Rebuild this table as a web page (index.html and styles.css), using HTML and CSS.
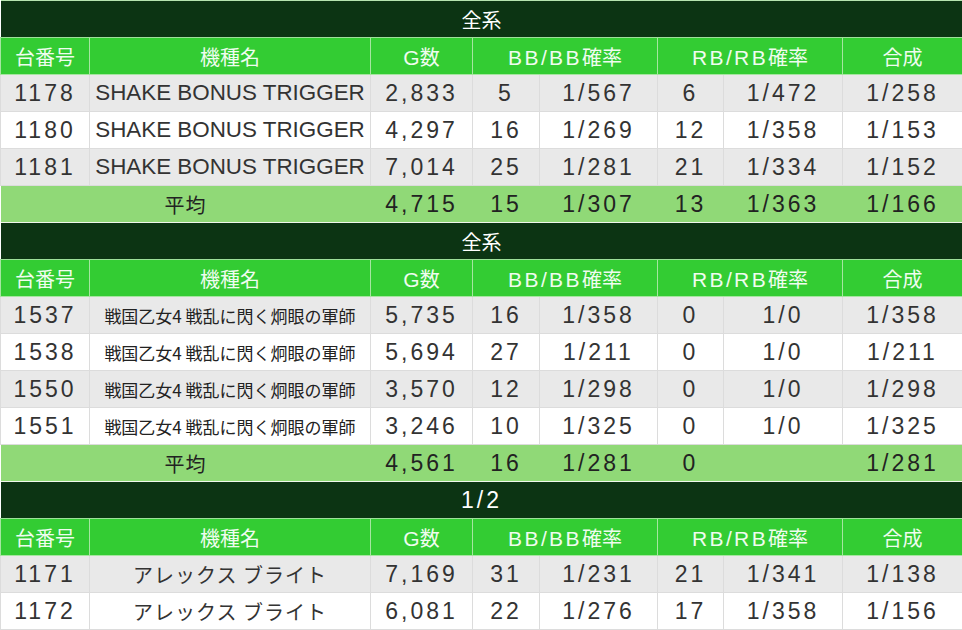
FILE: index.html
```html
<!DOCTYPE html>
<html lang="ja">
<head>
<meta charset="utf-8">
<title>データ</title>
<link rel="stylesheet" href="styles.css">
</head>
<body>
<table class="tbl">
  <colgroup>
    <col class="c1"><col class="c2"><col class="c3"><col class="c4"><col class="c5"><col class="c6"><col class="c7"><col class="c8">
  </colgroup>
  <tbody>
    <tr class="title"><td colspan="8">全系</td></tr>
    <tr class="head"><th>台番号</th><th>機種名</th><th><span class="lat">G</span>数</th><th colspan="2"><span class="lat2">BB/BB</span>確率</th><th colspan="2"><span class="lat2">RB/RB</span>確率</th><th>合成</th></tr>
    <tr class="row g"><td>1178</td><td class="nm en">SHAKE BONUS TRIGGER</td><td>2,833</td><td>5</td><td>1/567</td><td>6</td><td>1/472</td><td>1/258</td></tr>
    <tr class="row w"><td>1180</td><td class="nm en">SHAKE BONUS TRIGGER</td><td>4,297</td><td>16</td><td>1/269</td><td>12</td><td>1/358</td><td>1/153</td></tr>
    <tr class="row g"><td>1181</td><td class="nm en">SHAKE BONUS TRIGGER</td><td>7,014</td><td>25</td><td>1/281</td><td>21</td><td>1/334</td><td>1/152</td></tr>
    <tr class="avg"><td colspan="2" class="jp">平均</td><td>4,715</td><td>15</td><td>1/307</td><td>13</td><td>1/363</td><td>1/166</td></tr>

    <tr class="title"><td colspan="8">全系</td></tr>
    <tr class="head"><th>台番号</th><th>機種名</th><th><span class="lat">G</span>数</th><th colspan="2"><span class="lat2">BB/BB</span>確率</th><th colspan="2"><span class="lat2">RB/RB</span>確率</th><th>合成</th></tr>
    <tr class="row g"><td>1537</td><td class="nm sm">戦国乙女4 戦乱に閃く炯眼の軍師</td><td>5,735</td><td>16</td><td>1/358</td><td>0</td><td>1/0</td><td>1/358</td></tr>
    <tr class="row w"><td>1538</td><td class="nm sm">戦国乙女4 戦乱に閃く炯眼の軍師</td><td>5,694</td><td>27</td><td>1/211</td><td>0</td><td>1/0</td><td>1/211</td></tr>
    <tr class="row g"><td>1550</td><td class="nm sm">戦国乙女4 戦乱に閃く炯眼の軍師</td><td>3,570</td><td>12</td><td>1/298</td><td>0</td><td>1/0</td><td>1/298</td></tr>
    <tr class="row w"><td>1551</td><td class="nm sm">戦国乙女4 戦乱に閃く炯眼の軍師</td><td>3,246</td><td>10</td><td>1/325</td><td>0</td><td>1/0</td><td>1/325</td></tr>
    <tr class="avg"><td colspan="2" class="jp">平均</td><td>4,561</td><td>16</td><td>1/281</td><td>0</td><td></td><td>1/281</td></tr>

    <tr class="title"><td colspan="8" class="num">1/2</td></tr>
    <tr class="head"><th>台番号</th><th>機種名</th><th><span class="lat">G</span>数</th><th colspan="2"><span class="lat2">BB/BB</span>確率</th><th colspan="2"><span class="lat2">RB/RB</span>確率</th><th>合成</th></tr>
    <tr class="row g"><td>1171</td><td class="nm kana">アレックス ブライト</td><td>7,169</td><td>31</td><td>1/231</td><td>21</td><td>1/341</td><td>1/138</td></tr>
    <tr class="row w"><td>1172</td><td class="nm kana">アレックス ブライト</td><td>6,081</td><td>22</td><td>1/276</td><td>17</td><td>1/358</td><td>1/156</td></tr>
  </tbody>
</table>
</body>
</html>
```

FILE: styles.css
```css
html, body {
  margin: 0;
  padding: 0;
  background: #ffffff;
}

.tbl {
  width: 962px;
  border-collapse: collapse;
  table-layout: fixed;
  font-family: "Liberation Sans", "Noto Sans CJK JP", sans-serif;
}

.c1 { width: 89px; }
.c2 { width: 281px; }
.c3 { width: 102px; }
.c4 { width: 67px; }
.c5 { width: 118px; }
.c6 { width: 66px; }
.c7 { width: 119px; }
.c8 { width: 120px; }

.tbl td, .tbl th {
  height: 36px;
  padding: 0;
  text-align: center;
  vertical-align: middle;
  white-space: nowrap;
  overflow: hidden;
}

.title td {
  background: #0c3413;
  color: #ffffff;
  font-family: "Noto Sans CJK JP", sans-serif;
  font-size: 20px;
  border-top: 1px solid #b7e4b0;
  border-bottom: 1px solid #9ee09a;
}

.tbl .title td.num {
  font-family: "Liberation Sans", sans-serif;
  font-size: 23px;
  letter-spacing: 3px;
}

.head th {
  background: #33cc33;
  color: #effcef;
  font-family: "Noto Sans CJK JP", sans-serif;
  font-weight: normal;
  font-size: 20px;
  border: 1px solid #a6e6a0;
  border-top-color: #9ee09a;
}

.head .lat {
  font-family: "Liberation Sans", sans-serif;
  font-size: 21px;
}

.head .lat2 {
  font-family: "Liberation Sans", sans-serif;
  font-size: 21px;
  letter-spacing: 2.4px;
}

.row td {
  color: #333333;
  font-size: 23px;
  letter-spacing: 3px;
  border: 1px solid #dcdcdc;
}

.row.g td { background: #e9e9e9; }
.row.w td { background: #ffffff; }

.row td.nm { letter-spacing: 0; }
.row td.en { font-size: 22.4px; }
.row td.sm {
  font-family: "Noto Sans CJK JP", sans-serif;
  font-size: 17px;
  letter-spacing: 0;
  color: #222222;
}
.row td.kana {
  font-family: "Noto Sans CJK JP", sans-serif;
  font-size: 20px;
  letter-spacing: 1px;
}

.avg td {
  background: #90d977;
  color: #222222;
  font-size: 23px;
  letter-spacing: 3px;
  border-top: 1px solid #f0f8ec;
  border-bottom: 1px solid #f0f8ec;
}

.avg td.jp {
  font-family: "Noto Sans CJK JP", sans-serif;
  font-size: 20px;
  letter-spacing: 1px;
}
```
